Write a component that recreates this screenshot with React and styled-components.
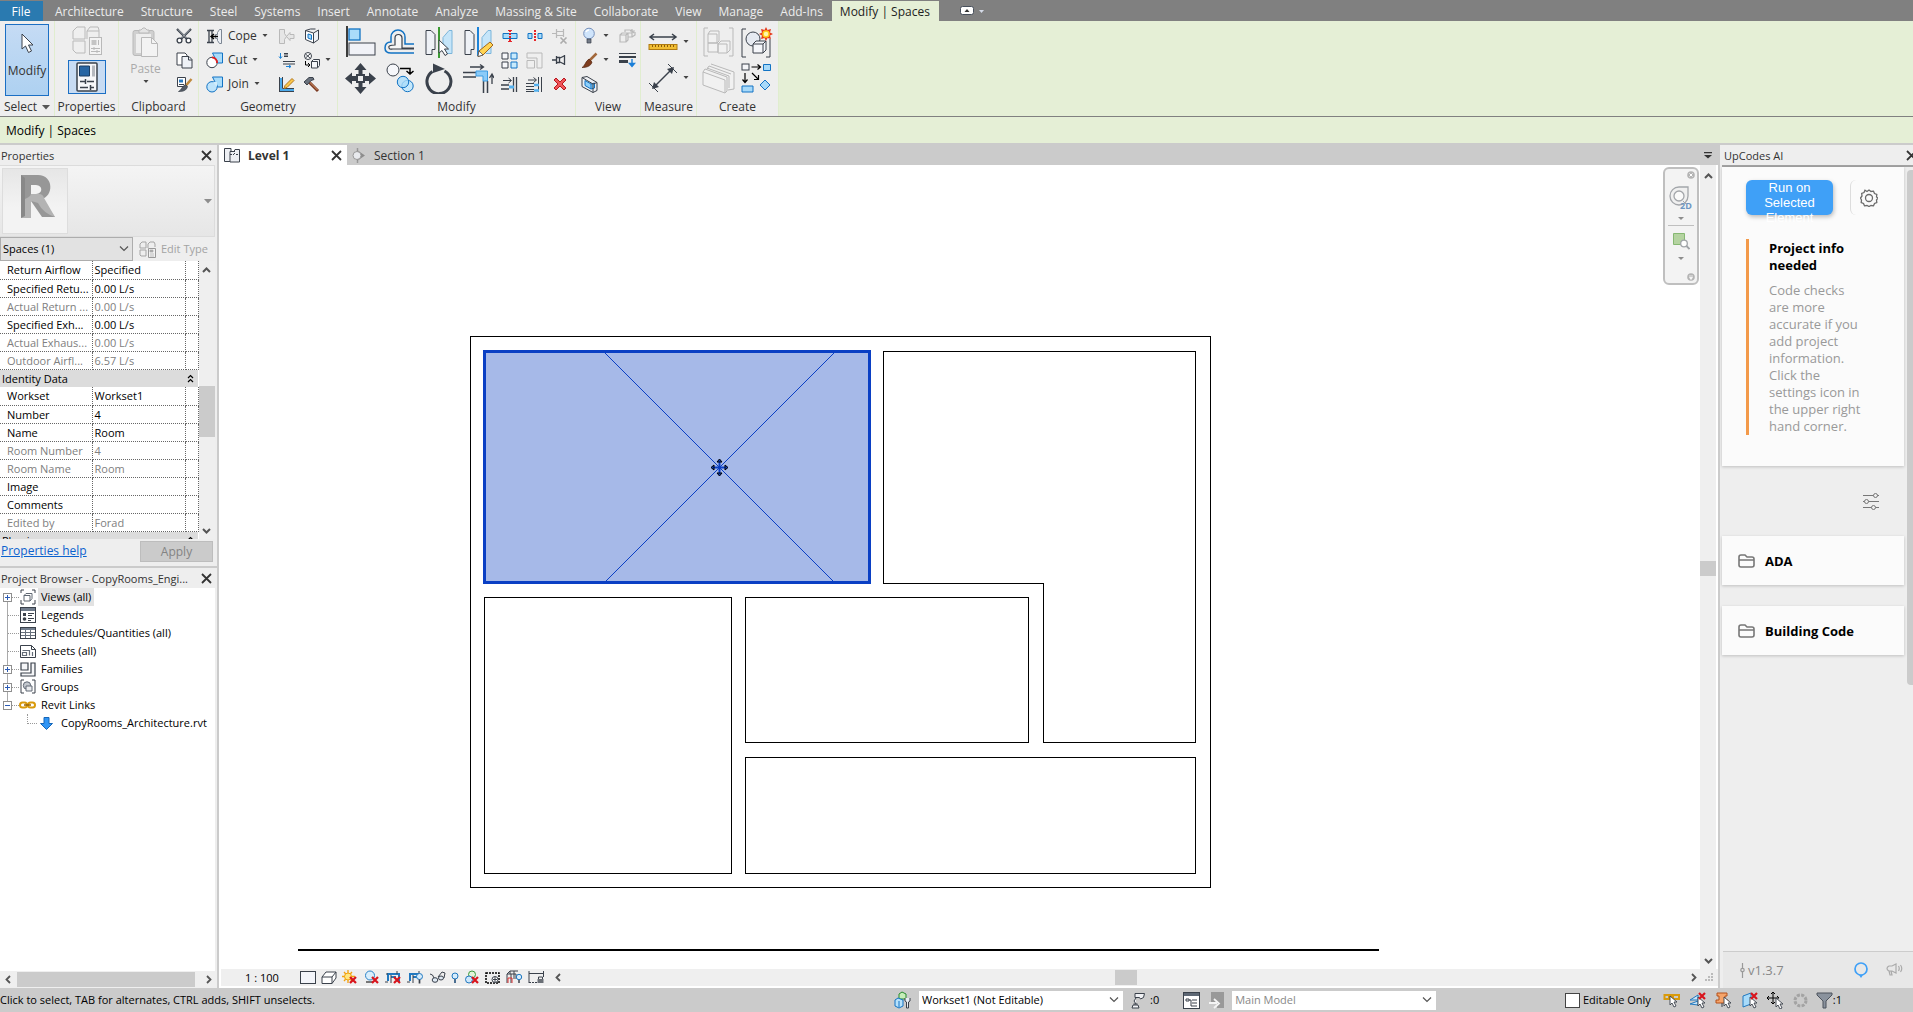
import React, { useState } from 'react'
import styled, { createGlobalStyle } from 'styled-components'

const ribbonTabs = ['Architecture', 'Structure', 'Steel', 'Systems', 'Insert', 'Annotate', 'Analyze', 'Massing & Site', 'Collaborate', 'View', 'Manage', 'Add-Ins']

const airflowRows = [
  { label: 'Return Airflow', value: 'Specified' },
  { label: 'Specified Retu...', value: '0.00 L/s' },
  { label: 'Actual Return ...', value: '0.00 L/s', locked: true },
  { label: 'Specified Exh...', value: '0.00 L/s' },
  { label: 'Actual Exhaus...', value: '0.00 L/s', locked: true },
  { label: 'Outdoor Airfl...', value: '6.57 L/s', locked: true },
]

const identityRows = [
  { label: 'Workset', value: 'Workset1' },
  { label: 'Number', value: '4' },
  { label: 'Name', value: 'Room' },
  { label: 'Room Number', value: '4', locked: true },
  { label: 'Room Name', value: 'Room', locked: true },
  { label: 'Image', value: '' },
  { label: 'Comments', value: '' },
  { label: 'Edited by', value: 'Forad', locked: true },
]

const browserItems = [
  { icon: 'treeViews', label: 'Views (all)', box: 'plus', selected: true },
  { icon: 'treeLegends', label: 'Legends' },
  { icon: 'treeSchedules', label: 'Schedules/Quantities (all)' },
  { icon: 'treeSheets', label: 'Sheets (all)' },
  { icon: 'treeFamilies', label: 'Families', box: 'plus' },
  { icon: 'treeGroups', label: 'Groups', box: 'plus' },
  { icon: 'treeLinks', label: 'Revit Links', box: 'minus' },
]

const ink = '#3a414b'
const blue = '#1273c4'
const sky = '#a9dcfa'
const pale = '#eef1f6'
const off = '#b9b9b9'

const redX = (x, y) => (
  <path d={`M${x} ${y}l6 6m0-6l-6 6`} stroke="#d8141c" strokeWidth="2.2" />
)
const pointer = (x, y) => (
  <path d={`M${x} ${y}v9l2-2l2 4l2-1l-2-4h3z`} fill="#fff" stroke={ink} strokeWidth="0.9" />
)

// every drawing is [width, height, content]
const art = {
  cursor: [14, 20, <path d="M2 1v15l3.500-3l3 6.500l3-1.500l-3-6h4.500z" fill="#fff" stroke={ink} />],
  typeProps: [30, 30, <>
    <path d="M1 5l4-4h8v12H1zM15 5l3-4h8l1 3v9M1 15h12v12H4l-3-3zM15 13V5h12" fill="#efefef" stroke={off} />
    <rect x="17.5" y="11.500" width="12" height="17" fill="#f3f3f3" stroke={off} />
    <path d="M19.500 14h5v5h-5z" fill="#c4c4c4" />
    <path d="M26.500 14v5M19 22.500h9M19 25.500h9M22 21v3M25 24v3" stroke={off} />
  </>],
  propsPanel: [22, 30, <>
    <rect x="1" y="1" width="20" height="28" rx="1" fill="#f6f7f9" stroke={ink} strokeWidth="1.500" />
    <path d="M3.500 4h10v10h-10z" fill="#2765a3" stroke="#1a3d63" />
    <path d="M16 3.500h3v11h-3z" fill="#b5b9bf" />
    <path d="M4 19.500h5m2 0h7M4 25.500h8m2 0h4M9.500 17v5M14.500 23v5" stroke={ink} strokeWidth="1.500" />
  </>],
  paste: [27, 31, <>
    <rect x="1" y="3.500" width="21" height="25" rx="2" fill="#d0d0d0" stroke={off} />
    <path d="M4 7h15v19H4z" fill="#eee" />
    <path d="M7 6V3h2l2-2h2l2 2h2v3z" fill="#e4e4e4" stroke={off} />
    <path d="M9.500 10.500h10l6 6v13h-16z" fill="#f3f3f3" stroke={off} />
    <path d="M19.500 10.500v6h6" fill="none" stroke={off} />
  </>],
  cut: [16, 16, <>
    <path d="M1 1l10 10M15 1l-10 10" stroke={ink} strokeWidth="2.200" />
    <path d="M2 1.500l9 9M14 1.500l-9 9" stroke="#d9dde2" strokeWidth="0.700" />
    <circle cx="3.500" cy="12.500" r="2.400" fill="#fff" stroke={ink} strokeWidth="1.300" />
    <circle cx="12.500" cy="12.500" r="2.400" fill="#fff" stroke={ink} strokeWidth="1.300" />
  </>],
  copy: [17, 17, <>
    <path d="M1 1h8l2 2v10H1z" fill="#fff" stroke={ink} />
    <path d="M6 4.500h7l3 3v8.500H6z" fill={pale} stroke={ink} />
    <path d="M12.500 4.500v3.500h3.500" fill="none" stroke={ink} />
  </>],
  matchType: [17, 17, <>
    <path d="M1.500 1.500h8v9h-8z" fill="#fff" stroke={ink} />
    <path d="M3 3.500h4v3H3z" fill="#2a7bc0" />
    <path d="M3 8.500h5" stroke={ink} />
    <path d="M15.500 3l-6 7" stroke="#c08a3e" strokeWidth="2.500" />
    <path d="M9.500 8.500l2 2c-1 4-4 5-9 5c3-1 3-5 7-7z" fill="#555c66" stroke={ink} strokeWidth="0.700" />
  </>],
  cope: [17, 17, <>
    <path d="M1 2.500h7M1 14.500h7M3 2.500v12M6 2.500v12" stroke={ink} strokeWidth="1.300" />
    <path d="M15.500 1.500h-2l-2 3v2h-2v4h2v2l2 3h2z" fill={pale} stroke="#7c8693" />
    <path d="M5 8.500h7M8 6l-3 2.500l3 2.500" fill="none" stroke="#000" strokeWidth="1.400" />
  </>],
  cutGeom: [17, 17, <>
    <path d="M6.500 1h10v10h-5z" fill={sky} stroke={blue} />
    <circle cx="6" cy="10.500" r="5.200" fill="#fff" stroke={ink} />
    <path d="M6 5.300a5.200 5.200 0 0 1 5 5.700" fill="none" stroke="#e02020" strokeWidth="1.800" />
  </>],
  joinGeom: [17, 17, <>
    <path d="M6.500 1h10v10h-5z" fill={sky} stroke={blue} />
    <circle cx="6" cy="10.800" r="5.200" fill="#bfe4fb" stroke={blue} />
    <path d="M7 6h4v5z" fill="#d2edfc" />
  </>],
  wallJoin: [17, 17, <path d="M1.500 1.500h5v4l2 3l-2 3v4h-5zM8.500 8.500l3.500-4v2h4v4h-4v2z" fill="#e6e6e6" stroke={off} />],
  beamJoin: [17, 17, <>
    <path d="M2.500 1v5M1 4.500l1.500 2l1.500-2M8 14.500h5M11 13l2 1.500L11 16" fill="none" stroke="#1b82d6" />
    <path d="M6 1.500h4M6 4.500h4M7 1v4M9 1v4M5 9.500h12M5 12h12" stroke={ink} />
  </>],
  wallEdit: [17, 17, <>
    <path d="M1.500 1v15M4.500 1v11.500H16M1.500 15.500H16" fill="none" stroke={ink} />
    <path d="M3 2v12h13" fill="none" stroke="#4ba9ea" strokeWidth="2" />
    <path d="M7 9.500l7-7l2 2l-7 7l-3 1z" fill="#fbc64a" stroke="#b2761c" />
  </>],
  openFace: [16, 17, <>
    <path d="M1.500 2.500l8 2.500v10l-8-3.500z" fill="#fff" stroke={ink} />
    <path d="M9.500 5l5-3v9.500l-5 3.500zM1.500 2.500l5-1.500h5" fill={pale} stroke={ink} />
    <path d="M4 6l3.500 1v4.500l-3.500-1.500z" fill={sky} stroke={blue} />
  </>],
  demolish: [17, 17, <>
    <circle cx="5" cy="4" r="3.500" fill="#fff" stroke={ink} />
    <path d="M2.500 2l5 4.500m0-5l-5 4.500" stroke={ink} />
    <path d="M2.500 9v4h4M5 11l2 2l-2 2" fill="none" stroke="#000" />
    <path d="M8.500 9.500l2-2h6v6l-2 2.500h-6zM8.500 9.500h6v6" fill="#f4f5f8" stroke={ink} />
  </>],
  hammer: [17, 17, <>
    <path d="M6 6l9 9" stroke="#7b3a22" strokeWidth="3" />
    <path d="M6.500 6l8 8" stroke="#dc9a6c" strokeWidth="1" />
    <path d="M1 6l5-4.500h4l1 2l-3 1l-4 4.500z" fill="#6a727d" stroke={ink} />
  </>],
  align: [30, 32, <>
    <path d="M1 0v31" stroke="#000" strokeWidth="1.500" />
    <rect x="3" y="3" width="11" height="11" fill={sky} stroke={blue} strokeWidth="1.300" />
    <rect x="3" y="17" width="26" height="12" fill="#f1f2f7" stroke={ink} />
  </>],
  offset: [31, 26, <>
    <path d="M30 15h-9v-7a7 7 0 0 0-14 0v5c-5 0-6 3-6 6s2 5 6 5h23" fill="none" stroke={blue} strokeWidth="1.500" />
    <path d="M30 19h-12V9a3.500 3.500 0 0 0-7 0v7c-5 0-7 1-6 3s2 1 4 1h21" fill="#f7f7f7" stroke={ink} strokeWidth="1.200" />
  </>],
  mirrorPick: [30, 31, <>
    <path d="M2 3.500h5l4 4v15H8v5H2z" fill={pale} stroke={ink} />
    <path d="M28 3.500h-3l-6 7v12l4 4h5z" fill="#c5e5f9" stroke="#7bb5da" />
    <path d="M15 0v31" stroke="#3c9a32" strokeWidth="2" />
    <path d="M15 13v13l3-2.500l3 5l2.500-1.500l-3-5h4z" fill="#fff" stroke={ink} />
  </>],
  mirrorDraw: [30, 31, <>
    <path d="M2 3.500h5l4 4v15H8v5H2z" fill={pale} stroke={ink} />
    <path d="M28 3.500h-3l-6 7v12l4 4h5z" fill="#c5e5f9" stroke="#7bb5da" />
    <path d="M15 0v29" stroke="#1d83d8" strokeWidth="2" />
    <path d="M16 24l11-9l3 3l-10 10l-5 1.500z" fill="#ffd453" stroke="#a2661b" />
    <path d="M16 24l4 4l-5 1.500z" fill="#fff" stroke={ink} strokeWidth="0.700" />
  </>],
  move: [31, 31, <path fillRule="evenodd" d="M15.500 0l6 7h-4v4h2.500v2h4V9.500l7 6l-7 6V18h-4v2h-2.500v4h4l-6 7l-6-7h4v-4H11v-2H7v3.500l-7-6l7-6V13h4v-2h2.500V7h-4zM13 13v5h5v-5z" fill={ink} />],
  copyObj: [30, 31, <>
    <circle cx="8" cy="7" r="6" fill="#f6f7fa" stroke={ink} />
    <path d="M15 5.500h10v5M21.500 8l3.500 3l3.500-3" fill="none" stroke="#000" strokeWidth="1.500" />
    <circle cx="22.500" cy="23" r="5.700" fill="#c5e8fb" stroke={blue} />
    <circle cx="18" cy="19" r="5.700" fill={sky} fillOpacity="0.800" stroke={blue} />
  </>],
  rotate: [30, 31, <>
    <path d="M20.500 8a12 12 0 1 1-12 0.500" fill="none" stroke={ink} strokeWidth="3" />
    <path d="M9 0.500l12 5.500l-12 4z" fill={ink} />
  </>],
  trim: [32, 31, <>
    <path d="M1 9.500h13M1 14h13M21.500 18v12M25.500 18v12" stroke={ink} strokeWidth="1.500" />
    <path d="M14 8h11.500v10H21v-5h-7z" fill="#8bcbf8" stroke="#3b9be2" />
    <path d="M8 4h13M18 1.500l3.500 2.500l-3.500 2.500M30 21V12M27.500 15L30 11l2 4" fill="none" stroke={ink} strokeWidth="1.300" />
  </>],
  splitElem: [16, 14, <>
    <path d="M1 4.500h14v5H1z" fill={sky} stroke={blue} />
    <path d="M8 1v12" stroke="#e5252a" strokeWidth="2" strokeDasharray="2 1" />
    <path d="M6 1.500h4M6 12.500h4" stroke="#e5252a" />
  </>],
  splitGap: [16, 14, <>
    <path d="M1 4.500h4v5H1zM11 4.500h4v5h-4z" fill={sky} stroke={blue} />
    <path d="M8 1v12" stroke="#e5252a" strokeWidth="2" strokeDasharray="2 1" />
  </>],
  unpin: [17, 16, <>
    <path d="M1 5.500h4M5.500 1v9M12.500 1v8M5.500 3.500h7v4h-7" fill="none" stroke={off} strokeWidth="1.200" />
    <path d="M9.500 9.500l6 6m0-6l-6 6" stroke="#adadad" strokeWidth="1.600" />
  </>],
  array: [17, 17, <>
    <path d="M1 1h6v6H1zM1 10h6v6H1z" fill="#f6f7fa" stroke={ink} />
    <path d="M10 1h6v6h-6zM10 10h6v6h-6z" fill="#c8eafc" stroke={blue} />
  </>],
  scale: [17, 17, <path d="M1 1h15v15h-5V6H1zM1 8.500h7.500V16H1z" fill="#efefef" stroke={off} />],
  pin: [16, 12, <path d="M0 6h4M4.500 2v8M12.500 1v10M4.500 3.500h3v5h-3M8 4l4-2M8 8l4 2" fill="none" stroke={ink} strokeWidth="1.300" />],
  trimSingle: [17, 17, <>
    <path d="M0 9h8M0 13h8M12.500 1v15M15.500 1v15" stroke={ink} strokeWidth="1.300" />
    <path d="M8 11h5" stroke="#54b1ef" strokeWidth="3" />
    <path d="M2 4.500h8M7.500 2l3 2.500l-3 2.500" fill="none" stroke={ink} />
  </>],
  trimMulti: [17, 17, <>
    <path d="M0 7.500h8M0 10.500h8M0 13.500h8M0 15.500h8M12.500 1v15M15.500 1v15" stroke={ink} />
    <path d="M8 9h5M8 14.500h5" stroke="#54b1ef" strokeWidth="2.500" />
    <path d="M2 4h8M7.500 1.500l3 2.500l-3 2.500" fill="none" stroke={ink} />
  </>],
  remove: [14, 14, <path d="M1 3l2-2l4 4l4-4l2 2l-4 4l4 4l-2 2l-4-4l-4 4l-2-2l4-4z" fill="#f0555a" stroke="#b8161d" />],
  bulb: [14, 18, <>
    <circle cx="7" cy="6.500" r="5.300" fill="#cfe4fb" stroke="#7590bb" />
    <path d="M4 5a3 3 0 0 1 3-2" fill="none" stroke="#fff" strokeWidth="1.500" />
    <path d="M5 12h4v4H5z" fill="#747c88" stroke={ink} strokeWidth="0.700" />
  </>],
  displace: [17, 16, <path d="M1 7l2-2h6v7l-2 2H1zM1 7h6v7M9 5l-2 2M6 4V2h5l2 1M9 9h4V5H9M13 9l3-2V4M13 1v5M11 3h5M12 2l3 3" fill="none" stroke={off} strokeWidth="1.200" />],
  brush: [17, 17, <>
    <path d="M15.500 1.500l-7 7" stroke="#a2683b" strokeWidth="2.500" />
    <path d="M8 7l3 3c-1 4-5 5.500-10 5.500c3-1 3-6 7-8.500z" fill="#7e3d1f" stroke="#552711" strokeWidth="0.700" />
  </>],
  lineWork: [17, 17, <>
    <path d="M0 1.500h17" stroke={ink} /><path d="M0 5h17" stroke={ink} strokeWidth="2" />
    <path d="M0 9.500h9" stroke={ink} strokeWidth="3" />
    <path d="M13 7v5M10.500 11.500h5l-2.500 3z" fill="#1b7fd8" stroke="#1b7fd8" strokeWidth="1.400" />
  </>],
  selBox: [17, 17, <>
    <path d="M1 1.500l5-1l10 6v8l-4 2l-11-6z" fill="#eef0f4" stroke={ink} />
    <path d="M4 4.500l6 3.500v5l-6-3.500zM10 8l3.500-1v5l-3.500 1" fill="#8fd0fa" stroke={blue} />
    <path d="M1 1.500l11 6.500v8.500M12 8l4-1.500" fill="none" stroke={ink} />
  </>],
  measure: [30, 18, <>
    <path d="M2 4h26M6 1L2 4l4 3M24 1l4 3l-4 3" fill="none" stroke={ink} strokeWidth="1.500" />
    <rect x="1" y="11.500" width="28" height="5" fill="#f0bd33" stroke="#b07b10" />
    <path d="M4.500 12v2m3-2v2m3-2v2m3-2v2m3-2v2m3-2v2m3-2v2m3-2v2" stroke="#8b5c0a" />
  </>],
  dimension: [30, 30, <>
    <path d="M5 25L25 5" stroke={ink} strokeWidth="1.500" />
    <path d="M4 26l2-7l5 5zM26 4l-7 2l5 5z" fill={ink} />
    <path d="M1 20l9 9M20 1l9 9" stroke={ink} />
  </>],
  createGroup: [31, 30, <>
    <path d="M5 1H1v28h4M26 1h4v28h-4" fill="none" stroke={off} />
    <path d="M5 7l2-3h9v10l-2 2H5zM5 16h10v9H5zM15 17l3-3h9v9l-3 3h-9zM15 17h9v9M5 7h9v9" fill="#f1f1f1" stroke={off} />
  </>],
  createSimilar: [32, 31, <>
    <path d="M5 2H1v28h4M25 30h4V12" fill="none" stroke={ink} />
    <circle cx="12" cy="12" r="7" fill="#e6eaf1" stroke={ink} />
    <path d="M12 17l3-3h10v9l-3 3H12zM12 17h10v9M22 17l3-3" fill="#f5f6fa" stroke={ink} />
    <path d="M25 0l1.500 3l3.500-1l-1 3.500l3 1.500l-3 1.500l1 3.500l-3.500-1l-1.500 3l-1.500-3l-3.500 1l1-3.500l-3-1.500l3-1.500l-1-3.500l3.500 1z" fill="#e6391b" />
    <circle cx="25" cy="7" r="3" fill="#fff8a8" stroke="#ffcb18" strokeWidth="1.500" />
  </>],
  assembly: [33, 31, <path d="M9 1l23 8v17l-6 1M5 5l22 8v12M1 9l22 8v13L1 22zM1 9l2-3l22 8v14l-2 2M5 6l2-3l22 8" fill="#f1f1f1" stroke={off} />],
  createParts: [31, 30, <>
    <rect x="1" y="1" width="7" height="6" fill="#f4f5f8" stroke={ink} />
    <path d="M22.500 1.500h7v6h-7zM1 23h11v6H1zM24 17l5 5l-5 5l-5-5z" fill="#a7d9f9" stroke={blue} />
    <path d="M10.500 4h9M16.500 1.500l3 2.500l-3 2.500M4 10v9M1.500 16.500l2.500 3l2.500-3M11 10l6 6M13 16.500h4.500V12" fill="none" stroke="#000" strokeWidth="1.200" />
  </>],
  editType: [17, 17, <>
    <path d="M1 3l2-2h4v6H1zM9 7V3l2-2h4l1 2v3M1 9h6v6H2l-1-1z" fill="none" stroke="#a5a5a5" />
    <path d="M9.500 7.500h7v9h-7z" fill="#f1f1f1" stroke="#999" /><path d="M11 9h3v2h-3zM11 13h4M11 15h4" fill="#aaa" stroke="#aaa" strokeWidth="0.700" />
  </>],
  treeViews: [16, 16, <>
    <path d="M4 1H1v3M12 1h3v3M1 11v4h3M15 11v4h-3" fill="none" stroke={ink} />
    <path d="M4 6.500l2-2h6v5l-2 2.500H4zM4 6.500h6V12" fill="#fff" stroke="#606873" />
  </>],
  treeLegends: [16, 16, <>
    <rect x="0.500" y="0.500" width="15" height="15" fill="#fff" stroke={ink} />
    <path d="M1 1h14v3H1z" fill="#707c8c" />
    <rect x="3" y="6" width="3" height="3" fill={ink} /><circle cx="4.500" cy="12" r="1.800" fill={ink} />
    <path d="M8 6.500h6M8 8.500h4M8 11.500h6M8 13.500h3" stroke={ink} />
  </>],
  treeSchedules: [16, 12, <>
    <rect x="0.500" y="0.500" width="15" height="11" fill="#fff" stroke={ink} />
    <path d="M1 1h14v2H1z" fill="#707c8c" /><path d="M1 5.500h14M1 8.500h14M5.500 3v8M10.500 3v8" stroke="#68717d" />
  </>],
  treeSheets: [16, 13, <>
    <path d="M.5.5h11l4 4v8H.5z" fill="#fff" stroke={ink} /><path d="M11.500.5v4h4" fill="none" stroke={ink} />
    <path d="M2.500 5.500h7v5M2.500 10.500v-3h4v3zM12.500 7v4" fill="none" stroke="#646d79" strokeWidth="1.200" />
  </>],
  treeFamilies: [16, 15, <path d="M1 1h7v7H1zM11 1h4v13H1v-3h10z" fill="#f5f6f8" stroke={ink} strokeWidth="1.200" />],
  treeGroups: [16, 16, <>
    <path d="M4 1H1v13h3M12 1h3v13h-3" fill="none" stroke={ink} />
    <circle cx="7" cy="6.500" r="3.700" fill="#c3c8cf" stroke="#616975" /><path d="M6 7h6v5H6z" fill="#e9ebee" stroke="#616975" />
  </>],
  treeLinks: [17, 8, <>
    <rect x="1" y="1.500" width="7" height="5" rx="2.500" fill="none" stroke="#d99a0b" strokeWidth="2" />
    <rect x="9" y="1.500" width="7" height="5" rx="2.500" fill="none" stroke="#d99a0b" strokeWidth="2" />
    <path d="M5 4h7" stroke="#96640a" strokeWidth="1.500" />
  </>],
  linkDown: [13, 13, <path d="M4 .5h5v6h3.500L6.500 12.500L.5 6.500H4z" fill="#2f95f5" stroke="#1466b8" />],
  plus: [9, 9, <><rect x="0.500" y="0.500" width="8" height="8" fill="#fff" stroke="#8f8f8f" /><path d="M2 4.500h5M4.500 2v5" stroke="#2b5bb5" /></>],
  minus: [9, 9, <><rect x="0.500" y="0.500" width="8" height="8" fill="#fff" stroke="#8f8f8f" /><path d="M2 4.500h5" stroke="#2b5bb5" /></>],
  planTab: [16, 15, <>
    <path d="M7 .5H.5v13H6M7 .5V3M6 3.500h4l1-2h4.500v12.500H6z" fill="#eef0f4" stroke={ink} />
    <path d="M6 6.500h4m2 0h3M10.500 2v4" stroke={ink} strokeDasharray="2 1" />
  </>],
  sectionTab: [14, 15, <>
    <path d="M5.500 0v15" stroke="#999" strokeWidth="1.500" /><path d="M5 2l8 5.500l-8 5.500z" fill="#8c8c8c" />
    <circle cx="5" cy="7.500" r="4" fill="#e8eaee" stroke="#999" />
  </>],
  close: [11, 11, <path d="M1 1l9 9M10 1l-9 9" stroke="#333" strokeWidth="1.800" />],
  collapse: [7, 9, <path d="M1 4l2.500-2.500L6 4M1 8l2.500-2.500L6 8" fill="none" stroke="#000" strokeWidth="1.200" />],
  chevUp: [9, 6, <path d="M1 5l3.500-3.500L8 5" fill="none" stroke="#555" strokeWidth="2" />],
  chevDown: [9, 6, <path d="M1 1l3.500 3.500L8 1" fill="none" stroke="#555" strokeWidth="2" />],
  chevThin: [10, 6, <path d="M1 .5l4 4l4-4" fill="none" stroke="#555" strokeWidth="1.200" />],
  chevLeft: [6, 9, <path d="M5 1L1.500 4.500L5 8" fill="none" stroke="#555" strokeWidth="1.800" />],
  chevRight: [6, 9, <path d="M1 1l3.500 3.500L1 8" fill="none" stroke="#555" strokeWidth="1.800" />],
  caret: [6, 4, <path d="M.5 0h5L3 3z" fill="#444" />],
  caretBig: [8, 5, <path d="M0 0h8L4 4.500z" fill="#555" />],
  caretGrey: [8, 5, <path d="M0 0h8L4 4.500z" fill="#8d8d8d" />],
  caretNav: [6, 3, <path d="M0 0h6L3 3z" fill="#8d8d8d" />],
  viewList: [8, 7, <><path d="M0 .5h8" stroke="#333" strokeWidth="1.500" /><path d="M0 3h8L4 6.500z" fill="#333" /></>],
  ribbonToggle: [24, 10, <>
    <rect x="0.500" y="0.500" width="13" height="8" rx="2" fill="#fff" stroke="#48505c" />
    <path d="M4.500 6h5L7 3z" fill="#333" /><path d="M19 4h5l-2.500 3z" fill="#d5dbe8" />
  </>],
  navWheel: [24, 24, <>
    <path d="M1 10a9 9 0 0 1 9-9h9v9a9 9 0 0 1-18 0z" fill="#f0f0f0" stroke="#a3a6aa" strokeWidth="1.300" />
    <circle cx="10" cy="10" r="5" fill="#fafafa" stroke="#a3a6aa" strokeWidth="1.300" />
    <path d="M14 15l3 3" stroke="#a3a6aa" />
    <text x="11" y="23" fontSize="9" fontWeight="bold" fill="#6d96c2" stroke="none" fontFamily="Open Sans, sans-serif">2D</text>
  </>],
  navZoom: [17, 17, <>
    <path d="M.5.5h11v11H.5z" fill="#b4d3a0" stroke="#86b872" />
    <circle cx="11" cy="10.500" r="3.300" fill="#fff" stroke="#a0a4a8" strokeWidth="1.300" /><path d="M13.500 13l3 3" stroke="#a0a4a8" strokeWidth="1.800" />
  </>],
  navClose: [8, 8, <><circle cx="4" cy="4" r="3.800" fill="#b4b4b4" /><path d="M2.500 2.500l3 3m0-3l-3 3" stroke="#fff" /></>],
  navMenu: [8, 8, <><circle cx="4" cy="4" r="3.800" fill="#b4b4b4" /><path d="M2 3h4M2.500 4.500h3L4 6.500z" fill="#fff" stroke="#fff" strokeWidth="0.700" /></>],
  gear: [18, 18, <>
    <path d="M9 1l2 1.500l2.500-.3l1 2.300l2.300 1l-.3 2.500L18 9l-1.500 2l.3 2.500l-2.300 1l-1 2.300l-2.500-.3L9 17.500L7 16.500l-2.500.3l-1-2.300l-2.300-1l.3-2.500L.5 9L2 7l-.3-2.500l2.300-1l1-2.300L7 2.500z" fill="none" stroke="#6b6b6b" strokeWidth="1.300" />
    <circle cx="9" cy="9" r="3.500" fill="none" stroke="#6b6b6b" strokeWidth="1.300" />
  </>],
  sliders: [16, 17, <>
    <path d="M0 2.500h16M0 8.500h16M0 14.500h16" stroke="#777" strokeWidth="1.200" />
    <circle cx="12.500" cy="2.500" r="2" fill="#eee" stroke="#777" /><circle cx="3.500" cy="8.500" r="2" fill="#eee" stroke="#777" /><circle cx="10.500" cy="14.500" r="2" fill="#eee" stroke="#777" />
  </>],
  folder: [17, 14, <path d="M1 3q0-2 2-2h4l2 2h5q2 0 2 2v6q0 2-2 2H3q-2 0-2-2zM1 6h15" fill="none" stroke="#777" strokeWidth="1.600" />],
  commit: [5, 15, <><path d="M2.500 0v5M2.500 9v6" stroke="#999" strokeWidth="1.200" /><circle cx="2.500" cy="7" r="1.700" fill="none" stroke="#999" strokeWidth="1.200" /></>],
  chatPin: [14, 16, <><circle cx="7" cy="7" r="6" fill="none" stroke="#3fa0f7" strokeWidth="1.700" /><path d="M5 13h4l-2 3z" fill="#3fa0f7" /></>],
  megaphone: [17, 14, <path d="M10 1v9L6 8H3q-2-1-2-2.500T3 3h3zM3 8l1 4h2l-1-4M12.500 3q1.500 2.500 0 5M14.500 2q2.500 3.500 0 7" fill="none" stroke="#aaa" strokeWidth="1.200" />],
  grip: [9, 9, <path d="M6 0h2v2H6zM3 3h2v2H3zM6 3h2v2H6zM0 6h2v2H0zM3 6h2v2H3zM6 6h2v2H6z" fill="#bbb" />],
  detail: [16, 14, <rect x="0.500" y="0.500" width="15" height="12" fill="#f3f5fa" stroke={ink} />],
  visualStyle: [16, 14, <path d="M1 6l4-5h10v6l-4 5.500H1zM1 6h10v6.500M11 6l4-5" fill="#fff" stroke={ink} />],
  sun: [17, 15, <><path d="M6 0v13M0 6.500h13M2 2l8 9M10 2l-8 9" stroke="#f2a10c" strokeWidth="1.300" /><circle cx="6" cy="6.500" r="3.500" fill="#ffe680" stroke="#f2a10c" />{redX(8, 7)}</>],
  shadows: [16, 15, <><circle cx="6" cy="5.500" r="4.500" fill="#d9eefc" stroke="#2b83c9" /><path d="M2 12h7" stroke="#777" strokeWidth="2" />{redX(8, 7)}</>],
  cropOff: [17, 15, <><path d="M3 11V4h11v8M6 7h5" fill="none" stroke="#2178bf" strokeWidth="2" /><path d="M0 12h3M6 13V5M12 1v3M1 4h2" stroke={ink} />{redX(9, 7)}</>],
  cropShow: [17, 15, <><path d="M3 11V4h9M6 7h4" fill="none" stroke="#2178bf" strokeWidth="2" /><path d="M0 12h3M6 13V5M12 1v3" stroke={ink} /><circle cx="12.500" cy="6.500" r="3" fill="#d6ecfc" stroke="#2178bf" /><path d="M12.500 9.500v4" stroke={ink} strokeWidth="1.700" /></>],
  glasses: [17, 14, <><path d="M1 3q3 0 4 4M9 6l4-5l3 1l-1 5" fill="none" stroke={ink} /><ellipse cx="6" cy="9" rx="2.800" ry="2.300" fill="#dfe9f3" stroke={ink} /><ellipse cx="12" cy="7" rx="2.500" ry="2" fill="#dfe9f3" stroke={ink} /></>],
  reveal: [8, 14, <><circle cx="4" cy="5" r="3" fill="#d6ecfc" stroke="#2178bf" /><path d="M4 8v4" stroke="#4c6f92" strokeWidth="2" /></>],
  worksharing: [16, 15, <><circle cx="8" cy="4.500" r="3.500" fill="#e2f4da" stroke="#3b9a3c" /><circle cx="5" cy="9.500" r="3.500" fill="#cfe8fb" stroke="#2178bf" />{redX(8, 7)}</>],
  tempProps: [16, 14, <><path d="M1 2h13v10H1z" fill="none" stroke="#000" strokeWidth="1.500" strokeDasharray="2 1" /><circle cx="10" cy="8.500" r="3" fill="#fff" stroke={ink} /><path d="M10 6v5M8 8.500h4" stroke={ink} /></>],
  analytical: [17, 15, <><path d="M1 4l3-3h8M1 4h9M1 4v9M5 4v9M10 4v5M4 1v3M8 1v8" fill="none" stroke={ink} /><path d="M2 13V8h4v5" fill="none" stroke="#d33" /><circle cx="13" cy="7" r="2.700" fill="#d6ecfc" stroke="#2178bf" /><path d="M13 10v3" stroke={ink} strokeWidth="1.500" /></>],
  constraints: [17, 15, <><path d="M1 1v12M15.500 1v6M1 3.500h14" stroke={ink} /><path d="M1 12.500h8" stroke={ink} strokeDasharray="2 1" /><path d="M9.500 9h6v4h-6z" fill="#6a6f76" /><path d="M10.500 9V7h4v2" fill="none" stroke={ink} /></>],
  worksets: [17, 18, <><path d="M5 3l3-2l4 2v5H5z" fill="#c6edb9" stroke="#278a2d" /><path d="M1 9l3-2l5 2v6l-4 2l-4-2z" fill="#b5e1fb" stroke={blue} /><path d="M5 10v6" stroke={blue} /><path d="M11 7v3l1.500 1v6h2v-6L16 10V7" fill="#e7edf4" stroke={ink} /></>],
  editReq: [15, 17, <><path d="M4 1.500h9.500l-1 4l-3 1.500l-1-1.500H4zM5 6l-2 3l2 3M2.500 12h4M1 16h7l-1-3H2z" fill="#f0f1f4" stroke={ink} /></>],
  options: [17, 17, <><rect x="0.500" y="0.500" width="16" height="16" fill="#fff" stroke={ink} /><path d="M1 2.500h15" stroke="#5d6774" strokeWidth="3" /><path d="M3 7h3v2H3zM6 8h2v6h2M9 8h5M9 11h5M10 14h4" fill="none" stroke={ink} /></>],
  addToSet: [16, 17, <><path d="M3 0h13v16H9v-4H3z" fill="#999" /><path d="M1 11h8M6 7l5 4.500l-5 4.500" fill="none" stroke="#f5f5f5" strokeWidth="1.800" /></>],
  selLinks: [18, 17, <><path d="M1.500 3h6v4h-6zM9 3h7v4H9zM5 5h6" fill="none" stroke="#d99a0b" strokeWidth="2" />{pointer(7, 4)}</>],
  selUnderlay: [18, 17, <><path d="M1 8l8-5v5zM1 12l8-3v4z" fill="#c8e6fa" stroke="#2178bf" />{pointer(9, 5)}{redX(10, 1)}</>],
  selPinned: [18, 17, <><path d="M2 1h10v3h-2v4h3v3H1V8h3V4H2z" fill="#f5a46a" stroke="#b4501b" /><path d="M7 11v4" stroke={ink} />{pointer(9, 5)}</>],
  selFace: [18, 17, <><path d="M2 4l8-3v11l-8 3z" fill="#a8dbfa" stroke="#2178bf" />{pointer(9, 5)}{redX(10, 1)}</>],
  dragSel: [18, 17, <><path d="M6 0v12M0 6h12M4 2l2-2l2 2M4 10l2 2l2-2M2 4L0 6l2 2M10 4l2 2" fill="none" stroke="#000" />{pointer(9, 6)}</>],
  busy: [15, 15, <circle cx="7.500" cy="7.500" r="5.500" fill="none" stroke="#a3a3a3" strokeWidth="3" strokeDasharray="3 1.320" />],
  funnel: [17, 17, <path d="M1 1h15v2l-6 6v7H7V9L1 3z" fill="#8a929d" stroke="#4c535d" />],
  logoR: [36, 44, <>
    <path d="M1 1h17c16 0 16 22 3 24l14 18H22L11 27v17H1z" fill="#979797" />
    <path d="M11 11h5c7 0 7 9 0 9h-5z" fill="#f3f3f3" />
    <path d="M1 26q9-2 10-6h8q4 0 5 4l11 19q-12-4-17-14l-7-2v17H1z" fill="#b3b3b3" />
    <path d="M1 1l4 3v38l-4 2z" fill="#888" />
  </>],
}

function Icon({ name }) {
  const [w, h, content] = art[name]
  return (
    <svg width={w} height={h} viewBox={`0 0 ${w} ${h}`} fill="none" aria-hidden="true">{content}</svg>
  )
}

function Tool({ icon, label, text, caret, off: disabled }) {
  return (
    <ToolButton aria-label={label} disabled={disabled}>
      {icon && <IconCell><Icon name={icon} /></IconCell>}
      {text}
      {caret && <Icon name="caret" />}
    </ToolButton>
  )
}

function Ribbon() {
  return (
    <RibbonBar>
      <Panel $width={55}>
        <PanelBody>
          <ModifyButton><Icon name="cursor" />Modify</ModifyButton>
        </PanelBody>
        <PanelLabel>Select <Icon name="caretBig" /></PanelLabel>
      </Panel>
      <Panel $width={64}>
        <Stack>
          <ToolButton aria-label="Type Properties" disabled><Icon name="typeProps" /></ToolButton>
          <PropsButton aria-label="Properties"><Icon name="propsPanel" /></PropsButton>
        </Stack>
        <PanelLabel>Properties</PanelLabel>
      </Panel>
      <Panel $width={80}>
        <PanelBody>
          <PasteButton disabled><Icon name="paste" />Paste<Icon name="caret" /></PasteButton>
          <SmallGrid $cols="17px">
            <Tool icon="cut" label="Cut to clipboard" />
            <Tool icon="copy" label="Copy to clipboard" />
            <Tool icon="matchType" label="Match type" />
          </SmallGrid>
        </PanelBody>
        <PanelLabel>Clipboard</PanelLabel>
      </Panel>
      <Panel $width={139}>
        <PanelBody $end>
          <SmallGrid $cols="72px 25px 34px">
            <Tool icon="cope" text="Cope" caret />
            <Tool icon="wallJoin" label="Wall joins" off />
            <Tool icon="openFace" label="Split face" />
            <Tool icon="cutGeom" text="Cut" caret />
            <Tool icon="beamJoin" label="Beam joins" />
            <Tool icon="demolish" label="Paint" caret />
            <Tool icon="joinGeom" text="Join" caret />
            <Tool icon="wallEdit" label="Edit wall joins" />
            <Tool icon="hammer" label="Demolish" />
          </SmallGrid>
        </PanelBody>
        <PanelLabel>Geometry</PanelLabel>
      </Panel>
      <Panel $width={238}>
        <PanelBody>
          <LargeGrid $cols="repeat(4, 39px)">
            {['align', 'offset', 'mirrorPick', 'mirrorDraw', 'move', 'copyObj', 'rotate', 'trim'].map(n => (
              <ToolButton key={n} aria-label={n}><Icon name={n} /></ToolButton>
            ))}
          </LargeGrid>
          <SmallGrid $cols="repeat(3, 25px)" $center>
            {['splitElem', 'splitGap', 'unpin', 'array', 'scale', 'pin', 'trimSingle', 'trimMulti', 'remove'].map(n => (
              <ToolButton key={n} aria-label={n}><Icon name={n} /></ToolButton>
            ))}
          </SmallGrid>
        </PanelBody>
        <PanelLabel>Modify</PanelLabel>
      </Panel>
      <Panel $width={65}>
        <PanelBody>
          <SmallGrid $cols="38px 17px">
            <Tool icon="bulb" label="Hide in view" caret />
            <Tool icon="displace" label="Displace elements" off />
            <Tool icon="brush" label="Override graphics" caret />
            <Tool icon="lineWork" label="Linework" />
            <Tool icon="selBox" label="Selection box" />
          </SmallGrid>
        </PanelBody>
        <PanelLabel>View</PanelLabel>
      </Panel>
      <Panel $width={56}>
        <LargeGrid $cols="50px">
          <ToolButton aria-label="Measure"><Icon name="measure" /><Icon name="caret" /></ToolButton>
          <ToolButton aria-label="Dimension"><Icon name="dimension" /><Icon name="caret" /></ToolButton>
        </LargeGrid>
        <PanelLabel>Measure</PanelLabel>
      </Panel>
      <Panel $width={82}>
        <LargeGrid $cols="repeat(2, 38px)">
          {['createGroup', 'createSimilar', 'assembly', 'createParts'].map(n => (
            <ToolButton key={n} aria-label={n}><Icon name={n} /></ToolButton>
          ))}
        </LargeGrid>
        <PanelLabel>Create</PanelLabel>
      </Panel>
    </RibbonBar>
  )
}

function PropertyRow({ row }) {
  return (
    <PropRow $locked={row.locked}>
      <th scope="row">{row.label}</th>
      <td>{row.value}</td>
      <td />
    </PropRow>
  )
}

function Properties() {
  return (
    <section>
      <PaletteHeader>
        <h2>Properties</h2>
        <IconButton aria-label="Close properties"><Icon name="close" /></IconButton>
      </PaletteHeader>
      <TypeSelector>
        <TypeThumb><Icon name="logoR" /></TypeThumb>
        <Icon name="caretGrey" />
      </TypeSelector>
      <FilterRow>
        <SelectBox $grey>
          <select aria-label="Element filter"><option>Spaces (1)</option></select>
          <Icon name="chevThin" />
        </SelectBox>
        <EditType disabled><Icon name="editType" />Edit Type</EditType>
      </FilterRow>
      <PropsScroller>
        <PropTable>
          <colgroup><col width="92" /><col width="93" /><col width="13" /></colgroup>
          <tbody>
            {airflowRows.map(row => <PropertyRow key={row.label} row={row} />)}
            <GroupRow>
              <th colSpan="2">Identity Data</th>
              <td><Icon name="collapse" /></td>
            </GroupRow>
            {identityRows.map(row => <PropertyRow key={row.label} row={row} />)}
            <GroupRow>
              <th colSpan="2">Phasing</th>
              <td><Icon name="collapse" /></td>
            </GroupRow>
          </tbody>
        </PropTable>
        <VScroll>
          <Icon name="chevUp" />
          <VTrack><VThumb $before={44} $size={21} /></VTrack>
          <Icon name="chevDown" />
        </VScroll>
      </PropsScroller>
      <PropsFooter>
        <a href="#help">Properties help</a>
        <ApplyButton disabled>Apply</ApplyButton>
      </PropsFooter>
    </section>
  )
}

function Browser() {
  return (
    <BrowserSection>
      <PaletteHeader>
        <h2>Project Browser - CopyRooms_Engi...</h2>
        <IconButton aria-label="Close project browser"><Icon name="close" /></IconButton>
      </PaletteHeader>
      <Tree>
        {browserItems.map((item, i) => (
          <TreeItem key={item.label} $first={i === 0} $last={i === browserItems.length - 1}>
            <TreeBranch>{item.box && <Icon name={item.box} />}<i /></TreeBranch>
            <TreeIcon><Icon name={item.icon} /></TreeIcon>
            <TreeLabel $selected={item.selected}>{item.label}</TreeLabel>
          </TreeItem>
        ))}
        <LinkItem>
          <LinkElbow />
          <Icon name="linkDown" />
          <TreeLabel>CopyRooms_Architecture.rvt</TreeLabel>
        </LinkItem>
      </Tree>
      <HScroll>
        <Icon name="chevLeft" />
        <HTrack><HThumb $before={0} $size={97} /></HTrack>
        <Icon name="chevRight" />
      </HScroll>
    </BrowserSection>
  )
}

function FloorPlan() {
  return (
    <svg width="100%" height="100%" fill="none" stroke="#000" role="img" aria-label="Level 1 floor plan">
      <g shapeRendering="crispEdges">
        <rect x="250.500" y="171.500" width="740" height="551" />
        <path d="M663.500 186.500h312v391h-152v-159h-160z" />
        <rect x="264.500" y="432.500" width="247" height="276" />
        <rect x="525.500" y="432.500" width="283" height="145" />
        <rect x="525.500" y="592.500" width="450" height="116" />
        <path d="M78 785h1081" strokeWidth="2" />
        <rect x="264.500" y="186.500" width="385" height="231" fill="#a6b9e8" stroke="#0a3fc4" strokeWidth="3" />
      </g>
      <path d="M384 187l231 231M615 187l-231 231" stroke="#0a3fc4" />
      <path d="M499.500 295v15M492 302.500h15" stroke="#0a3fc4" strokeWidth="2" />
      <path d="M497 297l2.500-3l2.500 3zM497 308l2.500 3l2.500-3zM494 300l-3 2.500l3 2.500zM505 300l3 2.500l-3 2.500z" fill="#0a3fc4" />
    </svg>
  )
}

const viewControls = ['detail', 'visualStyle', 'sun', 'shadows', 'cropOff', 'cropShow', 'glasses', 'reveal', 'worksharing', 'tempProps', 'analytical', 'constraints']

function Workspace() {
  const [view, setView] = useState('level')
  return (
    <WorkspaceColumn>
      <ViewTabs>
        <ViewTab $active={view === 'level'} onClick={() => setView('level')}>
          <Icon name="planTab" /><span>Level 1</span><Icon name="close" />
        </ViewTab>
        <ViewTab $active={view === 'section'} onClick={() => setView('section')}>
          <Icon name="sectionTab" /><span>Section 1</span>
        </ViewTab>
        <ViewListButton aria-label="Open views"><Icon name="viewList" /></ViewListButton>
      </ViewTabs>
      <CanvasRow>
        <Canvas>
          <FloorPlan />
          <NavBar>
            <NavEdge><Icon name="navClose" /></NavEdge>
            <IconButton aria-label="Steering wheel"><Icon name="navWheel" /></IconButton>
            <Icon name="caretNav" />
            <hr />
            <IconButton aria-label="Zoom"><Icon name="navZoom" /></IconButton>
            <Icon name="caretNav" />
            <NavEdge $bottom><Icon name="navMenu" /></NavEdge>
          </NavBar>
        </Canvas>
        <CanvasScroll>
          <Icon name="chevUp" />
          <VTrack><VThumb $before={49} $size={2} /></VTrack>
          <Icon name="chevDown" />
        </CanvasScroll>
      </CanvasRow>
      <ViewBar>
        <ScaleButton>1 : 100</ScaleButton>
        <ViewIcons>
          {viewControls.map(n => <IconButton key={n} aria-label={n}><Icon name={n} /></IconButton>)}
        </ViewIcons>
        <Icon name="chevLeft" />
        <HTrack><HThumb $before={49} $size={2} /></HTrack>
        <Icon name="chevRight" />
        <Icon name="grip" />
      </ViewBar>
    </WorkspaceColumn>
  )
}

function UpCodes() {
  return (
    <UpCodesColumn>
      <UpHeader>
        <h2>UpCodes AI</h2>
        <IconButton aria-label="Close UpCodes"><Icon name="close" /></IconButton>
      </UpHeader>
      <UpScroller>
        <UpContent>
          <InfoCard>
            <RunRow>
              <RunButton>Run on Selected Element</RunButton>
              <GearButton aria-label="Settings"><Icon name="gear" /></GearButton>
            </RunRow>
            <Notice>
              <h3>Project info needed</h3>
              <p>Code checks are more accurate if you add project information. Click the settings icon in the upper right hand corner.</p>
            </Notice>
          </InfoCard>
          <FilterStrip>
            <IconButton aria-label="Filter"><Icon name="sliders" /></IconButton>
          </FilterStrip>
          <CodeCard><Icon name="folder" />ADA</CodeCard>
          <CodeCard><Icon name="folder" />Building Code</CodeCard>
        </UpContent>
        <UpTrack><UpThumb /></UpTrack>
      </UpScroller>
      <UpFooter>
        <Icon name="commit" />
        <span>v1.3.7</span>
        <IconButton aria-label="Chat"><Icon name="chatPin" /></IconButton>
        <IconButton aria-label="News"><Icon name="megaphone" /></IconButton>
      </UpFooter>
    </UpCodesColumn>
  )
}

function StatusBar() {
  return (
    <Status>
      <StatusGroup>Click to select, TAB for alternates, CTRL adds, SHIFT unselects.</StatusGroup>
      <StatusGroup>
        <Icon name="worksets" />
        <SelectBox>
          <select aria-label="Active workset"><option>Workset1 (Not Editable)</option></select>
          <Icon name="chevThin" />
        </SelectBox>
        <Counter><Icon name="editReq" />:0</Counter>
        <Icon name="options" />
        <Icon name="addToSet" />
        <SelectBox>
          <select aria-label="Design option" disabled><option>Main Model</option></select>
          <Icon name="chevThin" />
        </SelectBox>
      </StatusGroup>
      <StatusGroup>
        <CheckLabel><input type="checkbox" />Editable Only</CheckLabel>
        {['selLinks', 'selUnderlay', 'selPinned', 'selFace', 'dragSel', 'busy'].map(n => (
          <IconButton key={n} aria-label={n}><Icon name={n} /></IconButton>
        ))}
        <Filter><Icon name="funnel" />:1</Filter>
      </StatusGroup>
    </Status>
  )
}

function App() {
  return (
    <Shell>
      <GlobalStyle />
      <TabStrip>
        <FileTab>File</FileTab>
        {ribbonTabs.map(tab => <RibbonTab key={tab}>{tab}</RibbonTab>)}
        <ContextTab>Modify | Spaces</ContextTab>
        <ToggleButton aria-label="Minimize ribbon"><Icon name="ribbonToggle" /></ToggleButton>
      </TabStrip>
      <Ribbon />
      <OptionsBar>Modify | Spaces</OptionsBar>
      <Main>
        <Sidebar>
          <Properties />
          <Browser />
        </Sidebar>
        <Workspace />
        <UpCodes />
      </Main>
      <StatusBar />
    </Shell>
  )
}

export default App

const GlobalStyle = createGlobalStyle`
  * {
    box-sizing: border-box;
  }
  body {
    margin: 0;
    background: #cbcbcb;
    color: #000;
    font-family: "Open Sans", "Noto Sans", sans-serif;
    font-size: 12px;
    line-height: 16px;
  }
  button, select, input {
    font: inherit;
    color: inherit;
  }
  button {
    border: 0;
    padding: 0;
    background: none;
    white-space: nowrap;
  }
  svg {
    display: block;
    flex-shrink: 0;
  }
  h2, h3, p {
    margin: 0;
  }
`

const Shell = styled.div`
  display: flex;
  flex-direction: column;
  height: 100vh;
  overflow: hidden;
`

const TabStrip = styled.nav`
  display: flex;
  height: 21px;
  padding-top: 1px;
  background: #808080;
`

const RibbonTab = styled.button`
  padding: 2px 9px 0 8px;
  color: #ececec;
`

const FileTab = styled(RibbonTab)`
  width: 43px;
  margin-right: 4px;
  background: #2a7ab0;
  color: #fff;
`

const ContextTab = styled(RibbonTab)`
  background: #e5efd6;
  color: #222;
`

const ToggleButton = styled.button`
  padding: 0 21px;
`

const RibbonBar = styled.div`
  display: flex;
  height: 96px;
  background: #e5efd6;
  border-bottom: 1px solid #808080;
`

const Panel = styled.div`
  display: flex;
  flex-direction: column;
  justify-content: space-between;
  width: ${props => props.$width}px;
  padding: 3px 0 1px;
  background: #eee;
  border-right: 1px solid #e0edcf;
`

const PanelBody = styled.div`
  display: flex;
  justify-content: ${props => (props.$end ? 'flex-end' : 'center')};
`

const PanelLabel = styled.div`
  display: flex;
  align-items: center;
  justify-content: center;
  gap: 5px;
  color: #333;
`

const ModifyButton = styled.button`
  display: flex;
  flex-direction: column;
  align-items: center;
  gap: 10px;
  width: 44px;
  height: 72px;
  padding-top: 8px;
  background: linear-gradient(#c5dbf4, #aed1f1);
  border: 1px solid #1b6fc4;
  color: #333;
`

const Stack = styled.div`
  display: flex;
  flex-direction: column;
  align-items: center;
  gap: 4px;
  padding-top: 2px;
`

const ToolButton = styled.button`
  display: flex;
  align-items: center;
  gap: 5px;
  color: #333;
`

const IconCell = styled.span`
  display: flex;
  justify-content: center;
  width: 17px;
`

const PropsButton = styled.button`
  display: flex;
  align-items: center;
  justify-content: center;
  width: 38px;
  height: 34px;
  background: #c8dcf3;
  border: 1px solid #1b6fc4;
`

const PasteButton = styled.button`
  display: flex;
  flex-direction: column;
  align-items: center;
  gap: 3px;
  width: 42px;
  margin-right: 9px;
  padding-top: 3px;
  color: #aaa;
`

const SmallGrid = styled.div`
  display: grid;
  grid-template-columns: ${props => props.$cols};
  grid-auto-rows: 24px;
  justify-items: ${props => (props.$center ? 'center' : 'start')};
`

const LargeGrid = styled.div`
  display: grid;
  grid-template-columns: ${props => props.$cols};
  grid-auto-rows: 36px;
  justify-items: center;
  justify-content: center;
`

const OptionsBar = styled.div`
  height: 26px;
  padding: 6px;
  background: #e5efd6;
`

const Main = styled.main`
  display: flex;
  flex: 1;
  min-height: 0;
  padding-top: 2px;
`

const Sidebar = styled.aside`
  display: flex;
  flex-direction: column;
  width: 219px;
  background: #eee;
  border-right: 2px solid #cbcbcb;
  font-size: 11px;
`

const PaletteHeader = styled.header`
  display: flex;
  align-items: center;
  justify-content: space-between;
  gap: 6px;
  height: 20px;
  padding: 0 5px 0 1px;
  color: #333;
  h2 {
    padding-top: 1px;
    white-space: nowrap;
    font-size: 11px;
    font-weight: 400;
  }
`

const IconButton = styled.button`
  display: flex;
  align-items: center;
  justify-content: center;
`

const TypeSelector = styled.div`
  display: flex;
  align-items: center;
  justify-content: space-between;
  height: 72px;
  margin-right: 2px;
  padding: 2px;
  background: linear-gradient(#f4f4f4, #e6e6e6);
  border: 1px solid #dcdcdc;
  border-left: 0;
`

const TypeThumb = styled.div`
  width: 66px;
  height: 66px;
  padding: 5px 17px;
  background: linear-gradient(#e6e6e6, #f3f3f3 60%);
  border: 1px solid #ddd;
`

const FilterRow = styled.div`
  display: flex;
  gap: 6px;
  height: 24px;
`

const SelectBox = styled.div`
  position: relative;
  width: ${props => (props.$grey ? '133px' : '204px')};
  height: ${props => (props.$grey ? '24px' : '19px')};
  select {
    appearance: none;
    width: 100%;
    height: 100%;
    padding: 0 2px;
    background: ${props => (props.$grey ? '#e2e2e2' : '#fff')};
    border: 1px solid ${props => (props.$grey ? '#adadad' : '#fff')};
    border-radius: 0;
  }
  select:disabled {
    color: #888;
    opacity: 1;
  }
  svg {
    position: absolute;
    right: 4px;
    top: 50%;
    margin-top: -3px;
    pointer-events: none;
  }
`

const EditType = styled.button`
  display: flex;
  align-items: center;
  gap: 5px;
  color: #a3a3a3;
`

const PropsScroller = styled.div`
  display: flex;
  height: 278px;
  margin-right: 2px;
  overflow: hidden;
`

const PropTable = styled.table`
  table-layout: fixed;
  width: 198px;
  border-collapse: collapse;
  background: #fff;
  th, td {
    overflow: hidden;
    white-space: nowrap;
    height: 18px;
    padding: 0 1px 0 2px;
    border: 0;
    font-weight: 400;
    text-align: left;
    line-height: 17px;
  }
`

const PropRow = styled.tr`
  color: ${props => (props.$locked ? '#808080' : '#000')};
  && > * {
    border-right: 1px dotted #666;
    border-bottom: 1px dotted #666;
  }
  && th {
    padding: 0 0 0 7px;
  }
`

const GroupRow = styled.tr`
  background: #dcdcdc;
`

const VScroll = styled.div`
  display: flex;
  flex-direction: column;
  align-items: center;
  gap: 6px;
  width: 17px;
  margin-left: auto;
  padding: 6px 0 5px;
  background: #efefef;
`

const CanvasScroll = styled(VScroll)`
  width: 18px;
  padding-top: 8px;
  border-right: 2px solid #fff;
`

const VTrack = styled.div`
  flex: 1;
  align-self: stretch;
`

const VThumb = styled.div`
  height: ${props => props.$size}%;
  position: relative;
  top: ${props => props.$before}%;
  background: #cbcbcb;
`

const HScroll = styled.div`
  display: flex;
  align-items: center;
  gap: 6px;
  height: 17px;
  padding: 0 5px;
  background: #efefef;
`

const HTrack = styled.div`
  flex: 1;
  height: 15px;
`

const HThumb = styled.div`
  width: ${props => props.$size}%;
  height: 100%;
  position: relative;
  left: ${props => props.$before}%;
  background: #cbcbcb;
`

const PropsFooter = styled.div`
  display: flex;
  justify-content: space-between;
  height: 29px;
  padding: 2px 4px 0 1px;
  border-bottom: 2px solid #cbcbcb;
  font-size: 12px;
  a {
    padding-top: 2px;
    color: #0b62cf;
  }
`

const ApplyButton = styled.button`
  width: 73px;
  height: 21px;
  background: #cbcbcb;
  border: 1px solid #bdbdbd;
  color: #838383;
`

const BrowserSection = styled.section`
  display: flex;
  flex-direction: column;
  flex: 1;
  min-height: 0;
`

const Tree = styled.ul`
  flex: 1;
  margin: 0 2px 0 0;
  padding: 0;
  overflow: hidden;
  background: #fff;
  list-style: none;
`

const TreeItem = styled.li`
  display: flex;
  align-items: center;
  height: 18px;
  background: linear-gradient(#aaa, #aaa) 7px ${props => (props.$first ? '9px' : '0')} / 1px ${props => (props.$last || props.$first ? '9px' : '18px')} no-repeat;
`

const TreeBranch = styled.span`
  display: flex;
  align-items: center;
  width: 19px;
  padding-left: 3px;
  i {
    flex: 1;
    margin-left: auto;
    border-top: 1px dotted #999;
  }
  > i:only-child {
    margin-left: 5px;
  }
`

const TreeIcon = styled.span`
  display: flex;
  justify-content: center;
  width: 17px;
`

const TreeLabel = styled.span`
  height: 18px;
  margin-left: 2px;
  padding: 0 3px;
  background: ${props => (props.$selected ? '#e2e2e2' : 'none')};
  line-height: 18px;
  white-space: nowrap;
`

const LinkItem = styled.li`
  display: flex;
  align-items: center;
  gap: 3px;
  height: 18px;
  padding-left: 27px;
`

const LinkElbow = styled.span`
  flex-shrink: 0;
  align-self: flex-start;
  width: 10px;
  height: 10px;
  border-left: 1px dotted #999;
  border-bottom: 1px dotted #999;
`

const WorkspaceColumn = styled.div`
  display: flex;
  flex-direction: column;
  flex: 1;
  min-width: 0;
  background: #fff;
  border-bottom: 2px solid #fff;
`

const ViewTabs = styled.div`
  display: flex;
  height: 20px;
  background: #cbcbcb;
`

const ViewTab = styled.button`
  display: flex;
  align-items: center;
  gap: 8px;
  width: 128px;
  padding: 0 5px;
  background: ${props => (props.$active ? '#fff' : 'none')};
  color: #333;
  font-weight: ${props => (props.$active ? 700 : 400)};
  text-align: left;
  span {
    flex: 1;
    padding-top: 2px;
  }
`

const ViewListButton = styled.button`
  margin-left: auto;
  padding: 0 6px;
`

const CanvasRow = styled.div`
  display: flex;
  flex: 1;
  min-height: 0;
`

const Canvas = styled.div`
  position: relative;
  flex: 1;
  min-width: 0;
  margin-left: 1px;
  overflow: hidden;
`

const NavBar = styled.div`
  position: absolute;
  top: 2px;
  right: 1px;
  display: flex;
  flex-direction: column;
  align-items: center;
  gap: 7px;
  width: 36px;
  height: 118px;
  padding: 2px;
  background: #f3f3f3;
  border: 2px solid #bfbfbf;
  border-radius: 6px;
  hr {
    width: 26px;
    margin: -2px 0 0;
    border: 0;
    border-top: 1px solid #bfbfbf;
  }
`

const NavEdge = styled.div`
  align-self: flex-end;
  margin-top: ${props => (props.$bottom ? 'auto' : '0')};
`

const ViewBar = styled.div`
  display: flex;
  align-items: center;
  gap: 8px;
  height: 17px;
  margin-left: 2px;
  padding-right: 4px;
  background: #efefef;
  font-size: 11px;
`

const ScaleButton = styled.button`
  padding: 0 13px 0 24px;
`

const ViewIcons = styled.div`
  display: flex;
  align-items: center;
  gap: 5px;
  padding-right: 2px;
`

const UpCodesColumn = styled.aside`
  display: flex;
  flex-direction: column;
  width: 195px;
  padding-left: 2px;
  background: #eee;
  border-left: 2px solid #cbcbcb;
  overflow: hidden;
`

const UpHeader = styled(PaletteHeader)`
  height: 22px;
  padding: 0 0 0 2px;
  border-bottom: 2px solid #a3a3a3;
  button {
    margin-right: -4px;
  }
`

const UpScroller = styled.div`
  display: flex;
  flex: 1;
  min-height: 0;
`

const UpContent = styled.div`
  flex: 1;
`

const InfoCard = styled.div`
  height: 299px;
  padding: 13px 24px;
  background: #fbfbfb;
  box-shadow: 0 1px 3px rgba(0, 0, 0, 0.2);
`

const RunRow = styled.div`
  display: flex;
  gap: 17px;
`

const RunButton = styled.button`
  width: 87px;
  height: 35px;
  padding: 0 12px;
  background: #3fa0f7;
  border-radius: 6px;
  box-shadow: 1px 2px 4px rgba(0, 0, 0, 0.25);
  color: #fff;
  font-family: "Liberation Sans", Arial, sans-serif;
  font-size: 13px;
  line-height: 15px;
  white-space: normal;
`

const GearButton = styled.button`
  display: flex;
  align-items: center;
  height: 35px;
  padding-left: 9px;
  border-left: 1px solid #ddd;
  border-radius: 6px;
`

const Notice = styled.div`
  width: 120px;
  margin-top: 24px;
  padding: 1px 5px 0 20px;
  border-left: 3px solid #f39a4a;
  color: #999;
  font-size: 13px;
  line-height: 17px;
  h3 {
    margin-bottom: 8px;
    color: #000;
    font-size: 13px;
  }
`

const FilterStrip = styled.div`
  display: flex;
  justify-content: flex-end;
  height: 70px;
  padding-right: 25px;
`

const CodeCard = styled.button`
  display: flex;
  align-items: center;
  gap: 10px;
  width: 100%;
  height: 49px;
  margin-bottom: 21px;
  padding-left: 16px;
  background: #fbfbfb;
  box-shadow: 0 1px 3px rgba(0, 0, 0, 0.2);
  font-size: 13px;
  font-weight: 700;
`

const UpTrack = styled.div`
  width: 9px;
  padding: 3px 0 0 3px;
`

const UpThumb = styled.div`
  height: 66%;
  background: #cbcbcb;
  border-radius: 4px 0 0 4px;
`

const UpFooter = styled.footer`
  display: flex;
  align-items: center;
  gap: 3px;
  height: 37px;
  margin-left: 1px;
  padding: 0 10px 0 17px;
  background: #e8e8e8;
  border-top: 1px solid #ccc;
  color: #888;
  font-size: 13px;
  span {
    flex: 1;
  }
  button + button {
    margin-left: 15px;
  }
`

const Status = styled.footer`
  display: grid;
  grid-template-columns: 894fr 671fr 348fr;
  height: 24px;
  background: #cbcbcb;
  font-size: 11px;
  white-space: nowrap;
`

const StatusGroup = styled.div`
  display: flex;
  align-items: center;
  gap: 8px;
  min-width: 0;
`

const Counter = styled.button`
  display: flex;
  align-items: center;
  gap: 4px;
  margin-right: 16px;
`

const CheckLabel = styled.label`
  display: flex;
  align-items: center;
  gap: 3px;
  margin-right: 4px;
  input {
    appearance: none;
    width: 15px;
    height: 15px;
    margin: 0;
    background: #fff;
    border: 1px solid #444;
  }
`

const Filter = styled.button`
  display: flex;
  align-items: center;
`
